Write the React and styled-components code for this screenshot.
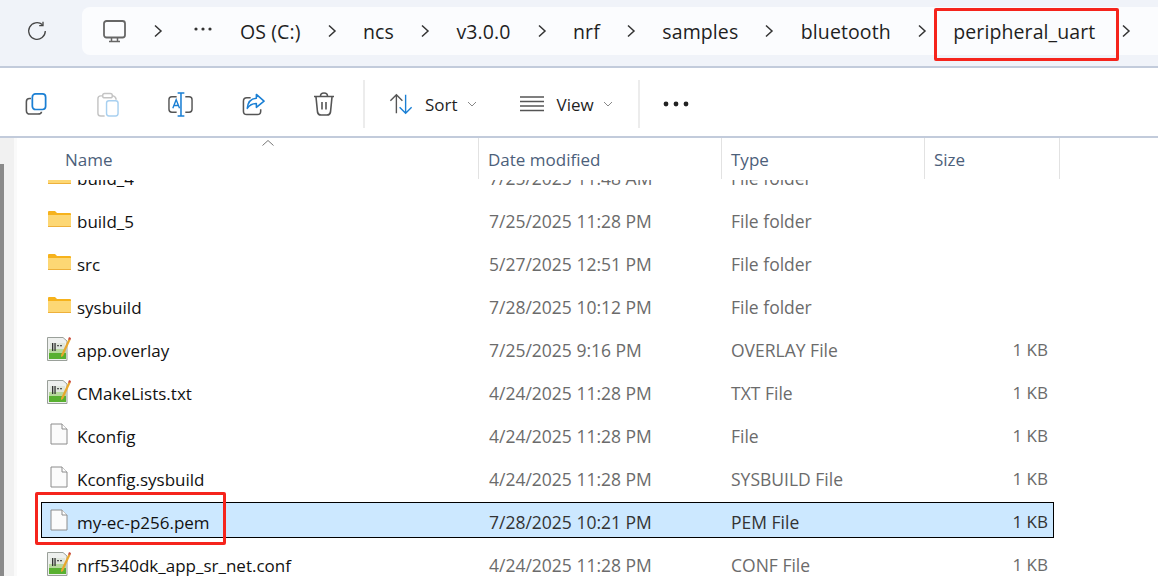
import React from 'react'
import styled, { createGlobalStyle } from 'styled-components'

const Global = createGlobalStyle`
  html, body { margin: 0; padding: 0; background: #fff; }
  body { font-family: "Open Sans", "Noto Sans", sans-serif; overflow: hidden; }
`;

const Page = styled.div`
  position: relative;
  width: 1158px;
  height: 576px;
  overflow: hidden;
`;
const AddressArea = styled.div`
  height: 68px;
  box-sizing: border-box;
  background: #f0f3f9;
  border-bottom: 2px solid #c2cbdb;
  display: flex;
  align-items: flex-start;
  padding-top: 7px;
`;
const Refresh = styled.div`
  width: 82px;
  height: 48px;
  display: flex;
  align-items: center;
  justify-content: center;
  padding-right: 8px;
  box-sizing: border-box;
`;
const AddressBar = styled.div`
  flex: 1;
  height: 48px;
  background: #fbfcfe;
  border-radius: 8px 0 0 8px;
  display: flex;
  align-items: center;
  padding-left: 21px;
  color: #1f1f1f;
  font-size: 19.5px;
  letter-spacing: 0.1px;
`;
const Crumb = styled.span`
  margin-left: ${p => p.$left}px;
  padding-top: 1px;
  white-space: nowrap;
  line-height: 48px;
`;
const Chevron = styled.svg`
  margin-left: ${p => p.$left}px;
  flex: none;
`;
const Dots = styled.svg`
  margin-left: 31px;
  margin-top: -4px;
  flex: none;
`;
const Toolbar = styled.div`
  height: 70px;
  box-sizing: border-box;
  border-bottom: 2px solid #c2cbdb;
  display: flex;
  align-items: center;
  background: #fff;
  padding: 4px 0 0 25px;
  color: #1f1f1f;
  font-size: 17px;
`;
const ToolIcon = styled.svg`
  margin-left: ${p => p.$left || 0}px;
  flex: none;
`;
const Divider = styled.div`
  width: 2px;
  height: 48px;
  background: #ececec;
  margin-left: ${p => p.$left}px;
  flex: none;
`;
const ToolLabel = styled.span`
  margin-left: 12px;
`;
const Body = styled.div`
  display: flex;
  height: 438px;
`;
const Gutter = styled.div`
  width: 17px;
  flex: none;
  background: #f1f1f1;
  display: flex;
  flex-direction: column;
  justify-content: flex-end;
  border-right: 3px solid #fafafa;
  box-sizing: border-box;
`;
const Thumb = styled.div`
  width: 4px;
  height: 412px;
  background: #8a8a8a;
`;
const Main = styled.div`
  flex: 1;
  min-width: 0;
`;
const Header = styled.div`
  position: relative;
  height: 42px;
  display: grid;
  grid-template-columns: 462px 243px 203px 135px;
  color: #4c607a;
  font-size: 17px;
  background: #fff;
`;
const HeadCell = styled.div`
  border-right: 1px solid #e2e2e2;
  padding-left: ${p => p.$left || 9}px;
  padding-top: 10px;
  box-sizing: border-box;
  height: 41px;
`;
const SortCaret = styled.svg`
  position: absolute;
  left: 244px;
  top: 1px;
`;
const List = styled.div`
  height: 396px;
  overflow: hidden;
`;
const Rows = styled.div`
  margin-top: -22px;
  margin-left: 24px;
  display: flex;
  flex-direction: column;
  gap: 7px;
`;
const Row = styled.div`
  width: 1013px;
  height: 36px;
  box-sizing: border-box;
  display: grid;
  grid-template-columns: 447px 242px 193px 124px;
  align-items: center;
  font-size: 17.5px;
  color: ${p => (p.$selected ? '#333' : '#6b6b6b')};
  border: 1px solid ${p => (p.$selected ? '#000' : 'transparent')};
  background: ${p => (p.$selected ? '#cce8ff' : 'transparent')};
  padding-top: 3px;
`;
const NameCell = styled.div`
  display: flex;
  align-items: center;
  color: #111;
  padding-left: 6px;
  margin-top: -3px;
  font-size: 17px;
`;
const IconSlot = styled.span`
  width: 29px;
  height: 24px;
  display: flex;
  align-items: center;
  flex: none;
`;
const NameText = styled.span`
  padding-top: 5px;
`;
const SizeCell = styled.div`
  text-align: right;
  font-size: 17px;
`;
const RedBox = styled.div`
  position: absolute;
  left: ${p => p.$x}px;
  top: ${p => p.$y}px;
  width: ${p => p.$w}px;
  height: ${p => p.$h}px;
  box-sizing: border-box;
  border: 3px solid #f5241c;
  border-radius: 2px;
`;
const PageIcon = styled.svg`
  margin-left: ${p => p.$left}px;
  flex: none;
`;

const files = [
  { name: 'build_4', date: '7/25/2025 11:48 AM', type: 'File folder', size: '', icon: 'folder' },
  { name: 'build_5', date: '7/25/2025 11:28 PM', type: 'File folder', size: '', icon: 'folder' },
  { name: 'src', date: '5/27/2025 12:51 PM', type: 'File folder', size: '', icon: 'folder' },
  { name: 'sysbuild', date: '7/28/2025 10:12 PM', type: 'File folder', size: '', icon: 'folder' },
  { name: 'app.overlay', date: '7/25/2025 9:16 PM', type: 'OVERLAY File', size: '1 KB', icon: 'notepad' },
  { name: 'CMakeLists.txt', date: '4/24/2025 11:28 PM', type: 'TXT File', size: '1 KB', icon: 'notepad' },
  { name: 'Kconfig', date: '4/24/2025 11:28 PM', type: 'File', size: '1 KB', icon: 'file' },
  { name: 'Kconfig.sysbuild', date: '4/24/2025 11:28 PM', type: 'SYSBUILD File', size: '1 KB', icon: 'file' },
  { name: 'my-ec-p256.pem', date: '7/28/2025 10:21 PM', type: 'PEM File', size: '1 KB', icon: 'file', selected: true },
  { name: 'nrf5340dk_app_sr_net.conf', date: '4/24/2025 11:28 PM', type: 'CONF File', size: '1 KB', icon: 'notepad' },
];

const crumbs = ['ncs', 'v3.0.0', 'nrf', 'samples', 'bluetooth', 'peripheral_uart'];

const Arrow = ({ left }) => (
  <Chevron $left={left} width="10" height="16" viewBox="0 0 10 16" fill="none">
    <path d="M2 2.5 L8 8 L2 13.5" stroke="#333" strokeWidth="1.5" />
  </Chevron>
);

const FolderIcon = () => (
  <svg width="23" height="18" viewBox="0 0 23 18">
    <path d="M0 2 Q0 1 1 1 H7 L9 3 H22 Q23 3 23 4 V6 H0 Z" fill="#f6b21c" />
    <path d="M0 5 H23 V16 Q23 17 22 17 H1 Q0 17 0 16 Z" fill="#fdd774" />
    <rect x="0" y="16" width="23" height="1" fill="#eeb03a" />
  </svg>
);

const FileIcon = () => (
  <PageIcon $left={2} width="18" height="22" viewBox="0 0 18 22" fill="none">
    <path d="M1 1 H12 L17 6 V21 H1 Z" fill="#fbfbfb" stroke="#8c8c8c" />
    <path d="M12 1 V6 H17" fill="#fff" stroke="#8c8c8c" />
  </PageIcon>
);

const NotepadIcon = () => (
  <PageIcon $left={-1} width="24" height="25" viewBox="0 0 24 25">
    <path d="M0.5 1.5 H16 L20 5 V24.5 H0.5 Z" fill="#eef0ee" stroke="#9aa09a" />
    <rect x="3" y="7" width="15" height="15" fill="#dfe6dc" />
    <rect x="2" y="17" width="17" height="6" fill="#58b030" />
    <rect x="2" y="13" width="17" height="4" fill="#b6d89c" />
    <rect x="5" y="7" width="1.3" height="8" fill="#333" />
    <rect x="7.4" y="7" width="1.3" height="8" fill="#333" />
    <rect x="10" y="9" width="2" height="1.3" fill="#555" />
    <rect x="13" y="9" width="2" height="1.3" fill="#555" />
    <path d="M14 19 L21.5 3 L23.5 4 L16 20 L14 21 Z" fill="#e8a72c" />
    <path d="M21 3.5 L22 1 L24 2 L23.5 4 Z" fill="#c94b3a" />
  </PageIcon>
);

const fileIcons = { folder: FolderIcon, file: FileIcon, notepad: NotepadIcon };

export default function App() {
  return (
    <Page>
      <Global />
      <AddressArea>
        <Refresh>
          <svg width="20" height="20" viewBox="0 0 20 20" fill="none">
            <path d="M15.5 3.8 A8.3 8.3 0 1 0 18.3 10" stroke="#444" strokeWidth="1.3" />
            <path d="M16 0.8 V4.6 H12.2" stroke="#444" strokeWidth="1.3" />
          </svg>
        </Refresh>
        <AddressBar>
          <svg width="23" height="23" viewBox="0 0 23 23" fill="none">
            <rect x="1" y="1" width="21" height="16.5" rx="2.5" stroke="#666" strokeWidth="1.8" />
            <path d="M8.5 18 V21 M14.5 18 V21 M6 21.5 H17" stroke="#666" strokeWidth="1.5" />
          </svg>
          <Arrow left={27} />
          <Dots width="18" height="4" viewBox="0 0 18 4">
            <circle cx="2" cy="2" r="1.6" fill="#333" />
            <circle cx="9" cy="2" r="1.6" fill="#333" />
            <circle cx="16" cy="2" r="1.6" fill="#333" />
          </Dots>
          <Crumb $left={28}>OS (C:)</Crumb>
          {crumbs.map(c => (
            <React.Fragment key={c}>
              <Arrow left={26} />
              <Crumb $left={26.5}>{c}</Crumb>
            </React.Fragment>
          ))}
          <Arrow left={26} />
        </AddressBar>
      </AddressArea>

      <Toolbar>
        <ToolIcon width="22" height="22" viewBox="0 0 24 24" fill="none">
          <rect x="8" y="1" width="14.5" height="17" rx="3.5" stroke="#1a7fd4" strokeWidth="1.9" />
          <path d="M6.5 6 H5 Q1.5 6 1.5 9.5 V19 Q1.5 23 5.5 23 H14 Q18 23 18 20.5" stroke="#555" strokeWidth="1.7" />
        </ToolIcon>
        <ToolIcon $left={49} width="23" height="25" viewBox="0 0 24 26" fill="none">
          <path d="M7 4 H5 Q2 4 2 7 V22 Q2 25 5 25 H9" stroke="#c4c4c4" strokeWidth="1.5" />
          <rect x="7" y="1.5" width="10" height="4.5" rx="2" stroke="#c4c4c4" strokeWidth="1.5" />
          <path d="M17 4 H18 Q21 5 21 8" stroke="#c4c4c4" strokeWidth="1.5" />
          <rect x="11" y="9" width="12" height="16" rx="2.5" stroke="#a8d0f0" strokeWidth="1.5" />
        </ToolIcon>
        <ToolIcon $left={49} width="25" height="25" viewBox="0 0 26 26" fill="none">
          <path d="M9 5 H4 Q1 5 1 8 V18 Q1 21 4 21 H9 M18 5 H22 Q25 5 25 8 V18 Q25 21 22 21 H18" stroke="#555" strokeWidth="1.5" />
          <path d="M13.5 1 V25 M10 1 H17 M10 25 H17" stroke="#1a7fd4" strokeWidth="1.6" />
          <path d="M5 17 L8.5 8 L12 17 M6 14 H11" stroke="#1a7fd4" strokeWidth="1.4" />
        </ToolIcon>
        <ToolIcon $left={49} width="23" height="23" viewBox="0 0 24 24" fill="none">
          <path d="M9 5 H5 Q1.5 5 1.5 8.5 V19 Q1.5 22.5 5 22.5 H16 Q19.5 22.5 19.5 19 V17" stroke="#555" strokeWidth="1.6" />
          <path d="M15 1.5 L23 8.5 L15 15 V11 Q9 11 5.5 16 Q6.5 6 15 5.5 Z" stroke="#1a7fd4" strokeWidth="1.6" strokeLinejoin="round" />
        </ToolIcon>
        <ToolIcon $left={48} width="22" height="24" viewBox="0 0 22 24" fill="none">
          <path d="M1 4.5 H21 M7.5 4 Q7.5 1 11 1 Q14.5 1 14.5 4" stroke="#555" strokeWidth="1.6" />
          <path d="M3 5 L4.5 20 Q5 23 8 23 H14 Q17 23 17.5 20 L19 5" stroke="#555" strokeWidth="1.6" />
          <path d="M9 10 V17.5 M13 10 V17.5" stroke="#555" strokeWidth="1.6" />
        </ToolIcon>
        <Divider $left={28} />
        <ToolIcon $left={24} width="24" height="24" viewBox="0 0 26 24" fill="none">
          <path d="M8 22 V2 M1.5 8.5 L8 2 L14.5 8.5" stroke="#555" strokeWidth="1.5" />
          <path d="M18 2 V22 M11.5 15.5 L18 22 L24.5 15.5" stroke="#1a7fd4" strokeWidth="1.5" />
        </ToolIcon>
        <ToolLabel>Sort</ToolLabel>
        <ToolIcon $left={9} width="10" height="6" viewBox="0 0 10 6" fill="none">
          <path d="M1 1 L5 5 L9 1" stroke="#888" />
        </ToolIcon>
        <ToolIcon $left={43} width="25" height="16" viewBox="0 0 25 16" fill="none">
          <path d="M0 1 H24 M0 5.5 H24 M0 10 H24 M0 14.5 H24" stroke="#555" strokeWidth="1.4" />
        </ToolIcon>
        <ToolLabel>View</ToolLabel>
        <ToolIcon $left={9} width="10" height="6" viewBox="0 0 10 6" fill="none">
          <path d="M1 1 L5 5 L9 1" stroke="#888" />
        </ToolIcon>
        <Divider $left={25} />
        <ToolIcon $left={23} width="26" height="6" viewBox="0 0 26 6">
          <circle cx="3" cy="3" r="2.4" fill="#222" />
          <circle cx="13" cy="3" r="2.4" fill="#222" />
          <circle cx="23" cy="3" r="2.4" fill="#222" />
        </ToolIcon>
      </Toolbar>

      <Body>
        <Gutter><Thumb /></Gutter>
        <Main>
          <Header>
            <HeadCell $left={48}>Name</HeadCell>
            <HeadCell>Date modified</HeadCell>
            <HeadCell>Type</HeadCell>
            <HeadCell>Size</HeadCell>
            <SortCaret width="14" height="8" viewBox="0 0 14 8" fill="none">
              <path d="M1.5 6.5 L7 1.5 L12.5 6.5" stroke="#777" />
            </SortCaret>
          </Header>
          <List>
            <Rows>
              {files.map(f => {
                const Icon = fileIcons[f.icon];
                return (
                  <Row key={f.name} $selected={f.selected}>
                    <NameCell>
                      <IconSlot><Icon /></IconSlot>
                      <NameText>{f.name}</NameText>
                    </NameCell>
                    <div>{f.date}</div>
                    <div>{f.type}</div>
                    <SizeCell>{f.size}</SizeCell>
                  </Row>
                );
              })}
            </Rows>
          </List>
        </Main>
      </Body>

      <RedBox $x={934} $y={8} $w={185} $h={53} />
      <RedBox $x={35} $y={492} $w={191} $h={53} />
    </Page>
  );
}
